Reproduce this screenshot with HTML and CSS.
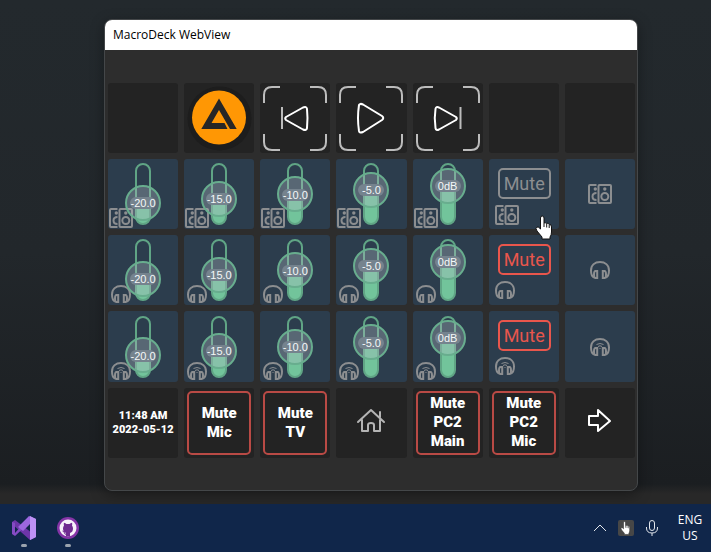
FILE: index.html
```html
<!DOCTYPE html>
<html lang="en">
<head>
<meta charset="utf-8">
<meta name="viewport" content="width=device-width, initial-scale=1">
<title>MacroDeck WebView</title>
<link rel="stylesheet" href="styles.css">
</head>
<body>
<svg class="sprite" aria-hidden="true">
  <symbol id="speakers" viewBox="0 0 24 20">
    <path d="M8.500 1H2Q1 1 1 2V18Q1 19 2 19H8.500M8.500 9Q4.500 9 4.500 12.500T8.500 16" />
    <rect x="10.500" y="1" width="12.500" height="18" rx="1" />
    <circle cx="16.800" cy="12.500" r="3.500" />
    <circle class="dot" cx="16.800" cy="5" r="1.700" /><circle class="dot" cx="7.300" cy="5" r="1.700" />
  </symbol>
  <symbol id="headphones" viewBox="0 0 20 18">
    <path d="M4 16.500Q1 15 1 9.500C1 4 5 1 10 1S19 4 19 9.500Q19 15 16 16.500" />
    <path d="M7.200 10V17H5.500Q4 17 4 13.500T5.500 10ZM12.800 10V17H14.500Q16 17 16 13.500T14.500 10Z" />
  </symbol>
  <symbol id="wireless" viewBox="0 0 20 18">
    <use href="#headphones" />
    <path class="thin" d="M6.500 6.500Q10 4.500 13.500 6.500M8 8.500Q10 7 12 8.500M10 10V11" />
  </symbol>
  <symbol id="brackets" viewBox="0 0 70 70">
    <path d="M4 20V12Q4 4 12 4H20M50 4H58Q66 4 66 12V20M66 51V59Q66 67 58 67H50M20 67H12Q4 67 4 59V51" />
  </symbol>
  <symbol id="hand" viewBox="0 0 18 25">
    <path d="M5.500 3Q5.500 1 7.200 1T9 3V8Q10 7 11.500 8.500Q13 7.500 14.200 9.500Q16.500 9 16.500 12V17Q16.500 20 15 22V24H7V22L2 16Q0 13 2 12Q3.500 11.500 5.500 14Z" />
    <path class="creases" d="M9 8V12M11.700 9V12.500M14.200 10V13" />
  </symbol>
</svg>

<main class="desktop">
  <section class="window" aria-label="MacroDeck WebView">
    <header class="titlebar">MacroDeck WebView</header>
    <div class="deck">
      <button class="tile" aria-label="Empty"></button>
      <button class="tile" aria-label="AIMP"><svg class="full" viewBox="0 0 70 70"><circle cx="35.500" cy="35.500" r="32" fill="#1d1d1d"/><circle cx="35" cy="34.500" r="27" fill="#ff9704"/><path fill="#262626" d="M35 15.500 52.700 46H46L35 27 27.500 40H40.500L43.500 46H17.300Z"/></svg></button>
      <button class="tile" aria-label="Previous"><svg class="full line"><use class="corner" href="#brackets"/><path class="bar" d="M22 24V46"/><path d="M26 34Q24.500 35.500 26 37L43 46.500Q46.500 48 47 45Q48 35 47 26Q46.500 23 43 24.500Z"/></svg></button>
      <button class="tile" aria-label="Play"><svg class="full line"><use class="corner" href="#brackets"/><path d="M23 22Q24 20 27 21.500L46 33Q48.500 35 46 37L27 49Q23.500 50.500 23 48Q21 35 23 22Z"/></svg></button>
      <button class="tile" aria-label="Next"><svg class="full line"><use class="corner" href="#brackets"/><path class="bar" d="M47.500 24V46"/><path d="M43 34Q44.500 35.500 43 37L26 46.500Q23 48 22.500 45Q21 35 22.500 26Q23 23 26 24.500Z"/></svg></button>
      <button class="tile" aria-label="Empty"></button>
      <button class="tile" aria-label="Empty"></button>

      <div class="tile channel"><svg class="source wide"><use href="#speakers"/></svg><label class="fader" style="--level:-20"><input type="range" min="-25" max="5" value="-20" aria-label="Speakers level 1"><output>-20.0</output></label></div>
      <div class="tile channel"><svg class="source wide"><use href="#speakers"/></svg><label class="fader" style="--level:-15"><input type="range" min="-25" max="5" value="-15" aria-label="Speakers level 2"><output>-15.0</output></label></div>
      <div class="tile channel"><svg class="source wide"><use href="#speakers"/></svg><label class="fader" style="--level:-10"><input type="range" min="-25" max="5" value="-10" aria-label="Speakers level 3"><output>-10.0</output></label></div>
      <div class="tile channel"><svg class="source wide"><use href="#speakers"/></svg><label class="fader" style="--level:-5"><input type="range" min="-25" max="5" value="-5" aria-label="Speakers level 4"><output>-5.0</output></label></div>
      <div class="tile channel"><svg class="source wide"><use href="#speakers"/></svg><label class="fader" style="--level:0"><input type="range" min="-25" max="5" value="0" aria-label="Speakers level 5"><output>0dB</output></label></div>
      <button class="tile channel mute"><span class="mute-label">Mute</span><svg class="icon wide"><use href="#speakers"/></svg><svg class="cursor" aria-hidden="true"><use href="#hand"/></svg></button>
      <button class="tile channel" aria-label="Speakers"><svg class="icon wide"><use href="#speakers"/></svg></button>

      <div class="tile channel"><svg class="source"><use href="#headphones"/></svg><label class="fader" style="--level:-20"><input type="range" min="-25" max="5" value="-20" aria-label="Headphones level 1"><output>-20.0</output></label></div>
      <div class="tile channel"><svg class="source"><use href="#headphones"/></svg><label class="fader" style="--level:-15"><input type="range" min="-25" max="5" value="-15" aria-label="Headphones level 2"><output>-15.0</output></label></div>
      <div class="tile channel"><svg class="source"><use href="#headphones"/></svg><label class="fader" style="--level:-10"><input type="range" min="-25" max="5" value="-10" aria-label="Headphones level 3"><output>-10.0</output></label></div>
      <div class="tile channel"><svg class="source"><use href="#headphones"/></svg><label class="fader" style="--level:-5"><input type="range" min="-25" max="5" value="-5" aria-label="Headphones level 4"><output>-5.0</output></label></div>
      <div class="tile channel"><svg class="source"><use href="#headphones"/></svg><label class="fader" style="--level:0"><input type="range" min="-25" max="5" value="0" aria-label="Headphones level 5"><output>0dB</output></label></div>
      <button class="tile channel mute muted"><span class="mute-label">Mute</span><svg class="icon"><use href="#headphones"/></svg></button>
      <button class="tile channel" aria-label="Headphones"><svg class="icon"><use href="#headphones"/></svg></button>

      <div class="tile channel"><svg class="source"><use href="#wireless"/></svg><label class="fader" style="--level:-20"><input type="range" min="-25" max="5" value="-20" aria-label="Wireless level 1"><output>-20.0</output></label></div>
      <div class="tile channel"><svg class="source"><use href="#wireless"/></svg><label class="fader" style="--level:-15"><input type="range" min="-25" max="5" value="-15" aria-label="Wireless level 2"><output>-15.0</output></label></div>
      <div class="tile channel"><svg class="source"><use href="#wireless"/></svg><label class="fader" style="--level:-10"><input type="range" min="-25" max="5" value="-10" aria-label="Wireless level 3"><output>-10.0</output></label></div>
      <div class="tile channel"><svg class="source"><use href="#wireless"/></svg><label class="fader" style="--level:-5"><input type="range" min="-25" max="5" value="-5" aria-label="Wireless level 4"><output>-5.0</output></label></div>
      <div class="tile channel"><svg class="source"><use href="#wireless"/></svg><label class="fader" style="--level:0"><input type="range" min="-25" max="5" value="0" aria-label="Wireless level 5"><output>0dB</output></label></div>
      <button class="tile channel mute muted"><span class="mute-label">Mute</span><svg class="icon"><use href="#wireless"/></svg></button>
      <button class="tile channel" aria-label="Wireless headphones"><svg class="icon"><use href="#wireless"/></svg></button>

      <button class="tile clock">11:48 AM<br>2022-05-12</button>
      <button class="tile"><span class="framed">Mute<br>Mic</span></button>
      <button class="tile"><span class="framed">Mute<br>TV</span></button>
      <button class="tile" aria-label="Home"><svg class="full line home"><path d="M22 34 35 22 48 34M44 29V24M26 32V43H32V37Q32 35 35 35T38 37V43H44V32"/></svg></button>
      <button class="tile"><span class="framed">Mute<br>PC2<br>Main</span></button>
      <button class="tile"><span class="framed">Mute<br>PC2<br>Mic</span></button>
      <button class="tile" aria-label="Next page"><svg class="full line"><path d="M24 28H33V22L45 33 33 43V37H24Z"/></svg></button>
    </div>
  </section>
</main>

<footer class="taskbar">
  <nav class="apps">
    <button class="app" aria-label="Visual Studio"><svg viewBox="0 0 24 24"><path fill="#6d35a8" d="M0 6 3 4 24 20 18 24 0 8Z"/><path fill="#854bc4" d="M0 18V6L3 7V17L17 1 18 6 3 20Z"/><path fill="#9b67df" d="M17 0 6 11 11 15 18 8V24L24 21V3Z"/><path fill="#bd91f5" d="M18 0 24 3V21L18 24Z"/></svg></button>
    <button class="app" aria-label="GitHub Desktop"><svg viewBox="0 0 24 24"><circle cx="12" cy="12" r="11" fill="#8534a7"/><circle cx="12" cy="12" r="8.500" fill="#f7f1fa"/><path fill="#702b91" d="M10 20.500V17Q7 16 7 12.500Q7 11 8 9.500Q7.500 8 8 6.800Q9.500 7 10.500 8H13.500Q14.500 7 16 6.800Q16.500 8 16 9.500Q17 11 17 12.500Q17 16 14 17V20.500Z"/><path d="M6.500 15Q8 15 8.500 17T10.500 18" fill="none" stroke="#702b91"/></svg></button>
  </nav>
  <div class="tray">
    <button class="tray-button" aria-label="Show hidden icons"><svg viewBox="0 0 16 16"><path d="M2 11 8 5 14 11"/></svg></button>
    <button class="tray-button pointer" aria-label="Pointer"><svg viewBox="0 0 16 16"><use href="#hand" x="2" y="1" width="11" height="14"/></svg></button>
    <button class="tray-button" aria-label="Microphone"><svg viewBox="0 0 16 16"><rect x="5.500" y="0.500" width="5" height="10" rx="2.500"/><path d="M2.500 7V8Q2.500 13 8 13T13.500 8V7M8 13V16"/></svg></button>
    <button class="language">ENG<br>US</button>
  </div>
</footer>
</body>
</html>
```

FILE: styles.css
```css
* { box-sizing: border-box; }

body {
  margin: 0;
  min-height: 100vh;
  display: flex;
  flex-direction: column;
  background: #22272b;
  font-family: "Open Sans", "Noto Sans", sans-serif;
}

button {
  margin: 0;
  padding: 0;
  border: 0;
  background: none;
  color: inherit;
  font: inherit;
}

svg { display: block; fill: none; }

.sprite { position: absolute; width: 0; height: 0; }

.desktop {
  flex: 1;
  display: flex;
  padding: 19px 73px 13px 104px;
  background: linear-gradient(#23292d 0%, #22272b 50%, #1b1e21 96%, #282828 98%);
}

.window {
  flex: 1;
  display: flex;
  flex-direction: column;
  border: 1px solid #444749;
  border-radius: 8px;
  overflow: hidden;
  background: #2d2d2d;
  box-shadow: 0 4px 14px rgba(0, 0, 0, .35);
}

.titlebar {
  height: 30px;
  padding-left: 8px;
  background: #fff;
  color: #000;
  font-size: 12px;
  line-height: 30px;
}

.deck {
  display: grid;
  grid-template-columns: repeat(7, 1fr);
  gap: 6px;
  padding: 33px 2px 0 3px;
}

.tile {
  position: relative;
  display: flex;
  align-items: center;
  justify-content: center;
  aspect-ratio: 1;
  min-width: 0;
  border-radius: 3px;
  background: #232323;
  color: #fff;
}

.channel { background: #2c3d4d; }

.full { width: 70px; height: 70px; }

.line {
  stroke: #fff;
  stroke-width: 2;
  stroke-linejoin: round;
  stroke-linecap: round;
}

.corner, .bar { stroke: #bcbcbc; stroke-linecap: butt; }
.home { stroke: #b4b4b4; }

.icon, .source {
  width: 20px;
  height: 18px;
  stroke: #8c8e90;
  stroke-width: 2;
}

.wide { width: 24px; height: 20px; }
.dot { fill: #8c8e90; stroke: none; }
.thin { stroke-width: 1; }

.source { position: absolute; left: 3px; bottom: 2px; }
.source.wide { left: 1px; bottom: 1px; }

.fader {
  position: relative;
  width: 36px;
  height: 62px;
}

.fader::before {
  content: "";
  position: absolute;
  inset: 0 10px;
  border: 2px solid #60a585;
  border-radius: 8px;
  background: linear-gradient(to top, #72c49b calc((var(--level) + 20) * 13px / 15 + 17px), transparent 0);
  background-origin: border-box;
}

.fader input {
  position: relative;
  display: block;
  width: 36px;
  height: 62px;
  margin: 0;
  appearance: none;
  background: none;
  writing-mode: vertical-lr;
  direction: rtl;
}

.fader input::-webkit-slider-thumb {
  appearance: none;
  width: 36px;
  height: 36px;
  border: 2px solid #68ad8e;
  border-radius: 50%;
  background: rgba(180, 190, 198, .33);
}

.fader output {
  position: absolute;
  left: 5px;
  bottom: calc((var(--level) + 20) * 13px / 15 + 16px);
  width: 26px;
  height: 12px;
  border-radius: 6px;
  background: #75838e;
  color: #f4f7f8;
  font: 11px/12px "Liberation Sans", Arial, sans-serif;
  display: flex;
  justify-content: center;
  pointer-events: none;
}

.mute {
  flex-direction: column;
  align-items: flex-start;
  justify-content: flex-start;
  gap: 6px;
  padding: 9px 0 0 6px;
}

.mute-label {
  width: 53px;
  height: 31px;
  margin-left: 3px;
  border: 2px solid #8c8e90;
  border-radius: 5px;
  color: #8c8e90;
  font: 18px/28px Roboto, "Liberation Sans", sans-serif;
}

.muted .mute-label { border-color: #e9564c; color: #e9564c; }

.cursor {
  position: absolute;
  z-index: 1;
  left: 46px;
  top: 56px;
  width: 18px;
  height: 25px;
  fill: #fff;
  stroke: #111;
}

.framed, .clock {
  font: 900 15px/19px Roboto, "Liberation Sans", sans-serif;
  text-align: center;
}

.framed {
  display: flex;
  align-items: center;
  justify-content: center;
  width: 64px;
  height: 64px;
  border: 2px solid #b94a45;
  border-radius: 5px;
}

.clock { font-size: 11px; line-height: 14px; }

.taskbar {
  display: flex;
  justify-content: space-between;
  height: 48px;
  padding: 0 1px 0 12px;
  background: #10264a;
  color: #fff;
}

.apps { display: flex; gap: 20px; }

.app {
  display: flex;
  flex-direction: column;
  align-items: center;
  justify-content: space-between;
  padding: 12px 0 5px;
}

.app svg { width: 24px; height: 24px; }

.app::after {
  content: "";
  width: 6px;
  height: 3px;
  border-radius: 2px;
  background: #9ba3ae;
}

.tray { display: flex; align-items: center; gap: 10px; }

.tray-button svg {
  width: 16px;
  height: 16px;
  stroke: #e3e7ed;
}

.pointer { border-radius: 2px; background: #474747; }
.pointer svg { fill: #fff; stroke: #333; }
.creases { fill: none; }

.language {
  width: 40px;
  font-size: 12px;
  line-height: 16px;
  text-align: center;
}
```
